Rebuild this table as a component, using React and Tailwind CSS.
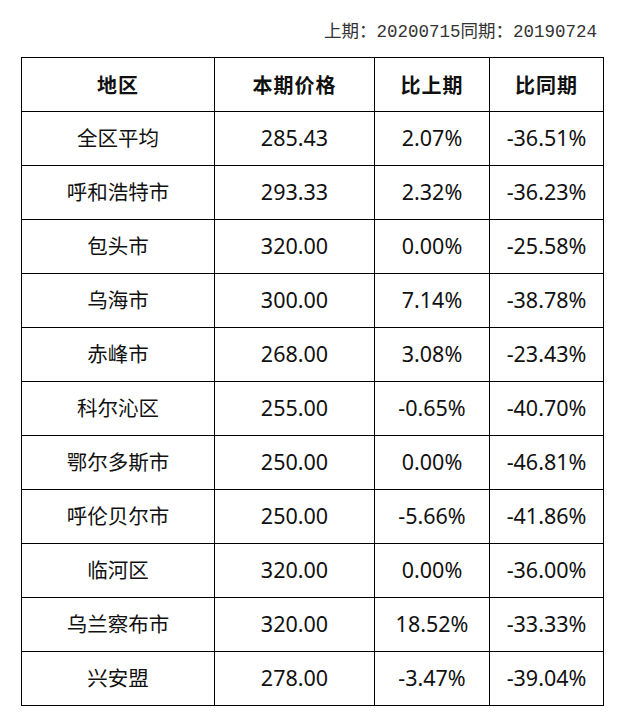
import React from 'react';

const rows = [
  ['全区平均', '285.43', '2.07%', '-36.51%'],
  ['呼和浩特市', '293.33', '2.32%', '-36.23%'],
  ['包头市', '320.00', '0.00%', '-25.58%'],
  ['乌海市', '300.00', '7.14%', '-38.78%'],
  ['赤峰市', '268.00', '3.08%', '-23.43%'],
  ['科尔沁区', '255.00', '-0.65%', '-40.70%'],
  ['鄂尔多斯市', '250.00', '0.00%', '-46.81%'],
  ['呼伦贝尔市', '250.00', '-5.66%', '-41.86%'],
  ['临河区', '320.00', '0.00%', '-36.00%'],
  ['乌兰察布市', '320.00', '18.52%', '-33.33%'],
  ['兴安盟', '278.00', '-3.47%', '-39.04%'],
];

const headers = ['地区', '本期价格', '比上期', '比同期'];

const cell = 'h-[54px] flex items-center justify-center border-t border-l border-black';

const App = () => {
  return (
    <div className="min-h-screen bg-white pt-[20px] pl-[21px] font-['Noto_Sans','Noto_Sans_CJK_SC',sans-serif]">
      <div className="w-[583px]">
        <p className="text-right pr-[7px] mb-[13px] text-[17.5px] leading-[24px] text-[#333] font-['Liberation_Mono','Noto_Sans_CJK_SC',monospace]">
          上期：20200715同期：20190724
        </p>

        <div className="grid grid-cols-[193px_160px_115px_114px] border-r border-b border-black">
          {headers.map((h) => (
            <div
              key={h}
              className={`${cell} text-[20px] font-bold tracking-[1px] text-[#111] font-['Noto_Sans_CJK_SC',sans-serif]`}
            >
              {h}
            </div>
          ))}
          {rows.map((r) =>
            r.map((v, i) => (
              <div
                key={r[0] + i}
                className={`${cell} text-[#111] ${i === 0 ? 'text-[20.5px]' : 'text-[21.5px]'}`}
              >
                {v}
              </div>
            ))
          )}
        </div>
      </div>
    </div>
  );
};

export default App;
